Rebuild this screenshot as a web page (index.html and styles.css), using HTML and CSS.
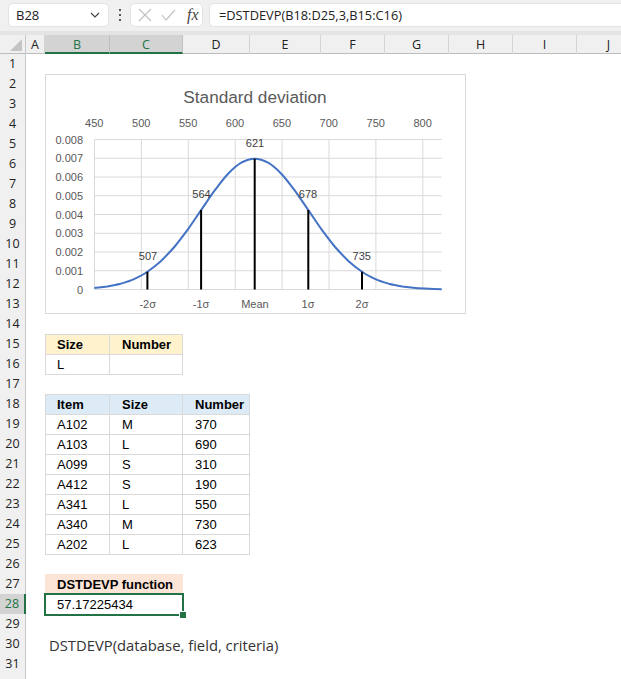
FILE: index.html
```html
<!DOCTYPE html>
<html>
<head>
<meta charset="utf-8">
<link rel="stylesheet" href="styles.css">
</head>
<body>
<div class="topbar">
  <div class="namebox">
    <span class="nb-text">B28</span>
    <svg class="chev" width="10" height="6" viewBox="0 0 10 6"><path d="M1 1 L5 5 L9 1" fill="none" stroke="#444" stroke-width="1.2"/></svg>
  </div>
  <div class="dots"><i></i><i></i><i></i></div>
  <div class="fxbox">
    <svg width="14" height="14" viewBox="0 0 14 14"><path d="M1 1 L13 13 M13 1 L1 13" stroke="#c2c2c2" stroke-width="1.2"/></svg>
    <svg width="15" height="12" viewBox="0 0 15 12"><path d="M1 6 L5 11 L14 1" fill="none" stroke="#c2c2c2" stroke-width="1.2"/></svg>
    <span class="fx">fx</span>
  </div>
  <div class="formula">=DSTDEVP(B18:D25,3,B15:C16)</div>
</div>
<div class="band"></div>
<div class="sheet">
  <div class="colhdr">
    <div class="corner"><svg width="12" height="12" viewBox="0 0 12 12"><path d="M12 0 L12 12 L0 12 Z" fill="#c4c4c4"/></svg></div>
    <div class="ch">A</div>
    <div class="ch sel">B</div>
    <div class="ch sel">C</div>
    <div class="ch">D</div>
    <div class="ch">E</div>
    <div class="ch">F</div>
    <div class="ch">G</div>
    <div class="ch">H</div>
    <div class="ch">I</div>
    <div class="ch">J</div>
  </div>
  <div class="rows">
    <div class="row"><div class="rh">1</div></div>
    <div class="row"><div class="rh">2</div></div>
    <div class="row"><div class="rh">3</div></div>
    <div class="row"><div class="rh">4</div></div>
    <div class="row"><div class="rh">5</div></div>
    <div class="row"><div class="rh">6</div></div>
    <div class="row"><div class="rh">7</div></div>
    <div class="row"><div class="rh">8</div></div>
    <div class="row"><div class="rh">9</div></div>
    <div class="row"><div class="rh">10</div></div>
    <div class="row"><div class="rh">11</div></div>
    <div class="row"><div class="rh">12</div></div>
    <div class="row"><div class="rh">13</div></div>
    <div class="row"><div class="rh">14</div></div>
    <div class="row"><div class="rh">15</div><div class="cell b t1 top left bold">Size</div><div class="cell c t1 top bold">Number</div></div>
    <div class="row"><div class="rh">16</div><div class="cell b left">L</div><div class="cell c"></div></div>
    <div class="row"><div class="rh">17</div></div>
    <div class="row"><div class="rh">18</div><div class="cell b t2 top left bold">Item</div><div class="cell c t2 top bold">Size</div><div class="cell d t2 top bold">Number</div></div>
    <div class="row"><div class="rh">19</div><div class="cell b left">A102</div><div class="cell c">M</div><div class="cell d">370</div></div>
    <div class="row"><div class="rh">20</div><div class="cell b left">A103</div><div class="cell c">L</div><div class="cell d">690</div></div>
    <div class="row"><div class="rh">21</div><div class="cell b left">A099</div><div class="cell c">S</div><div class="cell d">310</div></div>
    <div class="row"><div class="rh">22</div><div class="cell b left">A412</div><div class="cell c">S</div><div class="cell d">190</div></div>
    <div class="row"><div class="rh">23</div><div class="cell b left">A341</div><div class="cell c">L</div><div class="cell d">550</div></div>
    <div class="row"><div class="rh">24</div><div class="cell b left">A340</div><div class="cell c">M</div><div class="cell d">730</div></div>
    <div class="row"><div class="rh">25</div><div class="cell b left">A202</div><div class="cell c">L</div><div class="cell d">623</div></div>
    <div class="row"><div class="rh">26</div></div>
    <div class="row"><div class="rh">27</div><div class="cell bc t3 bold nob">DSTDEVP function</div></div>
    <div class="row"><div class="rh selr">28</div><div class="cell bc active nob">57.17225434<span class="handle"></span></div></div>
    <div class="row"><div class="rh">29</div></div>
    <div class="row"><div class="rh">30</div><div class="syntax">DSTDEVP(database, field, criteria)</div></div>
    <div class="row"><div class="rh">31</div></div>
    <div class="row"><div class="rh"></div></div>

    <div class="chart">
      <svg width="421" height="240" viewBox="45 74 421 240">
        <rect x="45.5" y="74.5" width="420" height="239" fill="#fff" stroke="#d9d9d9"/>
        <text class="title" x="255" y="97">Standard deviation</text>
        <g stroke="#d9d9d9" stroke-width="1">
          <path d="M94.3 139.5 H441.7 M94.3 158.25 H441.7 M94.3 177 H441.7 M94.3 195.75 H441.7 M94.3 214.5 H441.7 M94.3 233.25 H441.7 M94.3 252 H441.7 M94.3 270.75 H441.7 M94.3 289.5 H441.7"/>
          <path d="M94.5 139.5 V289.5 M141.4 139.5 V289.5 M188.3 139.5 V289.5 M235.2 139.5 V289.5 M282.1 139.5 V289.5 M329 139.5 V289.5 M375.9 139.5 V289.5 M422.8 139.5 V289.5"/>
        </g>
        <g class="ax" text-anchor="end">
          <text x="83" y="139.5">0.008</text>
          <text x="83" y="158.25">0.007</text>
          <text x="83" y="177">0.006</text>
          <text x="83" y="195.75">0.005</text>
          <text x="83" y="214.5">0.004</text>
          <text x="83" y="233.25">0.003</text>
          <text x="83" y="252">0.002</text>
          <text x="83" y="270.75">0.001</text>
          <text x="83" y="289.5">0</text>
        </g>
        <g class="ax" text-anchor="middle">
          <text x="94.3" y="123.3">450</text>
          <text x="141.2" y="123.3">500</text>
          <text x="188.1" y="123.3">550</text>
          <text x="235" y="123.3">600</text>
          <text x="281.9" y="123.3">650</text>
          <text x="328.8" y="123.3">700</text>
          <text x="375.7" y="123.3">750</text>
          <text x="422.6" y="123.3">800</text>
        </g>
        <g class="ax" text-anchor="middle">
          <text x="147.7" y="304">-2σ</text>
          <text x="201.1" y="304">-1σ</text>
          <text x="254.9" y="304">Mean</text>
          <text x="308" y="304">1σ</text>
          <text x="362" y="304">2σ</text>
        </g>
        <path fill="none" stroke="#4472c4" stroke-width="2" stroke-linejoin="round" d="M94.3 288 C98.6 287.5 102.9 287.1 107.2 286.5 C111.7 285.7 116.1 284.9 120.6 283.75 C125.1 282.4 129.5 281.1 134 279.1 C138.5 277 142.9 274.9 147.4 271.8 C151.9 268.6 156.3 265.2 160.8 261.2 C165.3 256.8 169.8 252.2 174.3 247 C178.8 241.5 183.2 235.7 187.7 229.6 C192.2 223.3 196.6 216.6 201.1 210.1 C205.6 203.6 210 197 214.5 190.7 C219 184.8 223.4 178.7 227.9 174 C232.4 169.3 236.8 165.2 241.3 162.7 C245.8 160.2 250.2 158.7 254.7 158.7 C259.2 158.7 263.6 160.2 268.1 162.7 C272.6 165.2 277 169.3 281.5 174 C286 178.7 290.4 184.8 294.9 190.7 C299.4 197 303.8 203.6 308.3 210.1 C312.8 216.6 317.2 223.3 321.7 229.6 C326.2 235.7 330.6 241.5 335.1 247 C339.6 252.2 344.1 256.8 348.6 261.2 C353.1 265.2 357.5 268.6 362 271.8 C366.5 274.9 370.9 277 375.4 279.1 C379.9 281.1 384.3 282.4 388.8 283.75 C393.3 284.9 397.7 285.7 402.2 286.5 C406.7 287.1 411.1 287.6 415.6 288.05 C420.1 288.4 424.5 288.6 429 288.8 C433.2 289 437.5 289.1 441.7 289.2"/>
        <g stroke="#000" stroke-width="2">
          <path d="M147.4 271.8 V289.5 M201.1 210.1 V289.5 M254.7 158.7 V289.5 M308.3 210.1 V289.5 M362 271.8 V289.5"/>
        </g>
        <g class="dl" text-anchor="middle">
          <text x="255" y="142.7">621</text>
          <text x="201.5" y="194">564</text>
          <text x="308" y="194">678</text>
          <text x="148" y="256">507</text>
          <text x="361.7" y="256">735</text>
        </g>
      </svg>
    </div>
  </div>
</div>
</body>
</html>
```

FILE: styles.css
```css
* { box-sizing: border-box; }
html, body { margin: 0; padding: 0; }
body {
  width: 621px;
  height: 679px;
  overflow: hidden;
  background: #fff;
  font-family: "Liberation Sans", Arial, sans-serif;
}
.topbar {
  height: 31px;
  background: #f0f0f0;
  display: flex;
  align-items: flex-start;
  padding-top: 3px;
  padding-left: 8px;
}
.namebox {
  width: 101px;
  height: 24px;
  background: #fff;
  border: 1px solid #e3e3e3;
  border-radius: 5px;
  display: flex;
  align-items: center;
  justify-content: space-between;
  padding: 0 8px 0 7px;
  font-family: "Open Sans", sans-serif;
  font-size: 13px;
  color: #222;
}
.dots {
  width: 21px;
  height: 24px;
  display: flex;
  flex-direction: column;
  align-items: center;
  justify-content: center;
  gap: 3px;
}
.dots i { display: block; width: 2px; height: 2px; background: #555; }
.fxbox {
  width: 73px;
  height: 24px;
  background: #fff;
  border: 1px solid #e3e3e3;
  border-radius: 5px;
  display: flex;
  align-items: center;
  gap: 9px;
  padding-left: 7px;
}
.fx {
  font-family: "Liberation Serif", serif;
  font-style: italic;
  font-size: 16px;
  color: #444;
  margin-left: 2px;
}
.formula {
  flex: 1;
  margin-left: 6px;
  height: 24px;
  background: #fff;
  border: 1px solid #e3e3e3;
  border-right: none;
  border-radius: 5px 0 0 5px;
  padding-left: 9px;
  font-family: "Open Sans", sans-serif;
  font-size: 12.8px;
  line-height: 22px;
  color: #222;
}
.band { height: 4px; background: #e4e4e4; }
.sheet { position: relative; }
.colhdr, .row {
  display: grid;
  grid-template-columns: 26px 19px 65px 73px 67px 71px 64px 64px 64px 64px 64px;
}
.colhdr {
  height: 19px;
  background: #f0f0f0;
  border-bottom: 1px solid #bdbdbd;
}
.corner {
  border-right: 1px solid #c8c8c8;
  display: flex;
  align-items: flex-end;
  justify-content: flex-end;
  padding: 0 3px 3px 0;
}
.ch {
  border-right: 1px solid #d4d4d4;
  text-align: center;
  font-family: "Open Sans", sans-serif;
  font-size: 12.5px;
  line-height: 19px;
  color: #222;
}
.ch.sel {
  background: #d3d3d3;
  color: #217346;
  border-bottom: 2px solid #217346;
  border-right-color: #c0c0c0;
  height: 19px;
}
.rows { position: relative; }
.row { height: 20px; }
.rh {
  grid-column: 1;
  background: #f0f0f0;
  border-right: 1px solid #c8c8c8;
  border-bottom: 1px solid #dadada;
  text-align: center;
  font-family: "Open Sans", sans-serif;
  font-size: 12.5px;
  line-height: 20px;
  color: #222;
}
.rh.selr {
  background: #d3d3d3;
  color: #217346;
  border-right: 2px solid #217346;
}
.cell {
  border-right: 1px solid #d9d9d9;
  border-bottom: 1px solid #d9d9d9;
  padding-left: 12px;
  padding-top: 1px;
  font-size: 13px;
  line-height: 19px;
  color: #000;
  white-space: nowrap;
}
.cell.top { border-top: 1px solid #d9d9d9; padding-top: 0; }
.cell.left { border-left: 1px solid #d9d9d9; padding-left: 11px; }
.cell.nob { border: none; }
.b { grid-column: 3; }
.c { grid-column: 4; }
.d { grid-column: 5; }
.bc { grid-column: 3 / 5; }
.bold { font-weight: bold; }
.t1 { background: #fff2cc; }
.t2 { background: #ddebf7; }
.t3 { background: #fce4d6; }
.active {
  position: relative;
  outline: 2px solid #217346;
  outline-offset: -1px;
}
.handle {
  position: absolute;
  right: -4px;
  bottom: -4px;
  width: 6px;
  height: 6px;
  background: #217346;
  border: 1px solid #fff;
  box-sizing: content-box;
}
.syntax {
  grid-column: 3 / 9;
  padding-left: 4px;
  padding-top: 1px;
  font-family: "Open Sans", sans-serif;
  font-size: 14.8px;
  line-height: 20px;
  color: #333;
  white-space: nowrap;
}
.chart {
  position: absolute;
  left: 45px;
  top: 20px;
  width: 421px;
  height: 240px;
}
.chart svg { display: block; }
.chart text { font-family: "Liberation Sans", Arial, sans-serif; dominant-baseline: central; }
.chart .title { font-size: 17.2px; fill: #595959; text-anchor: middle; }
.chart .ax text { font-size: 11px; fill: #595959; }
.chart .dl text { font-size: 11px; fill: #404040; }
```
